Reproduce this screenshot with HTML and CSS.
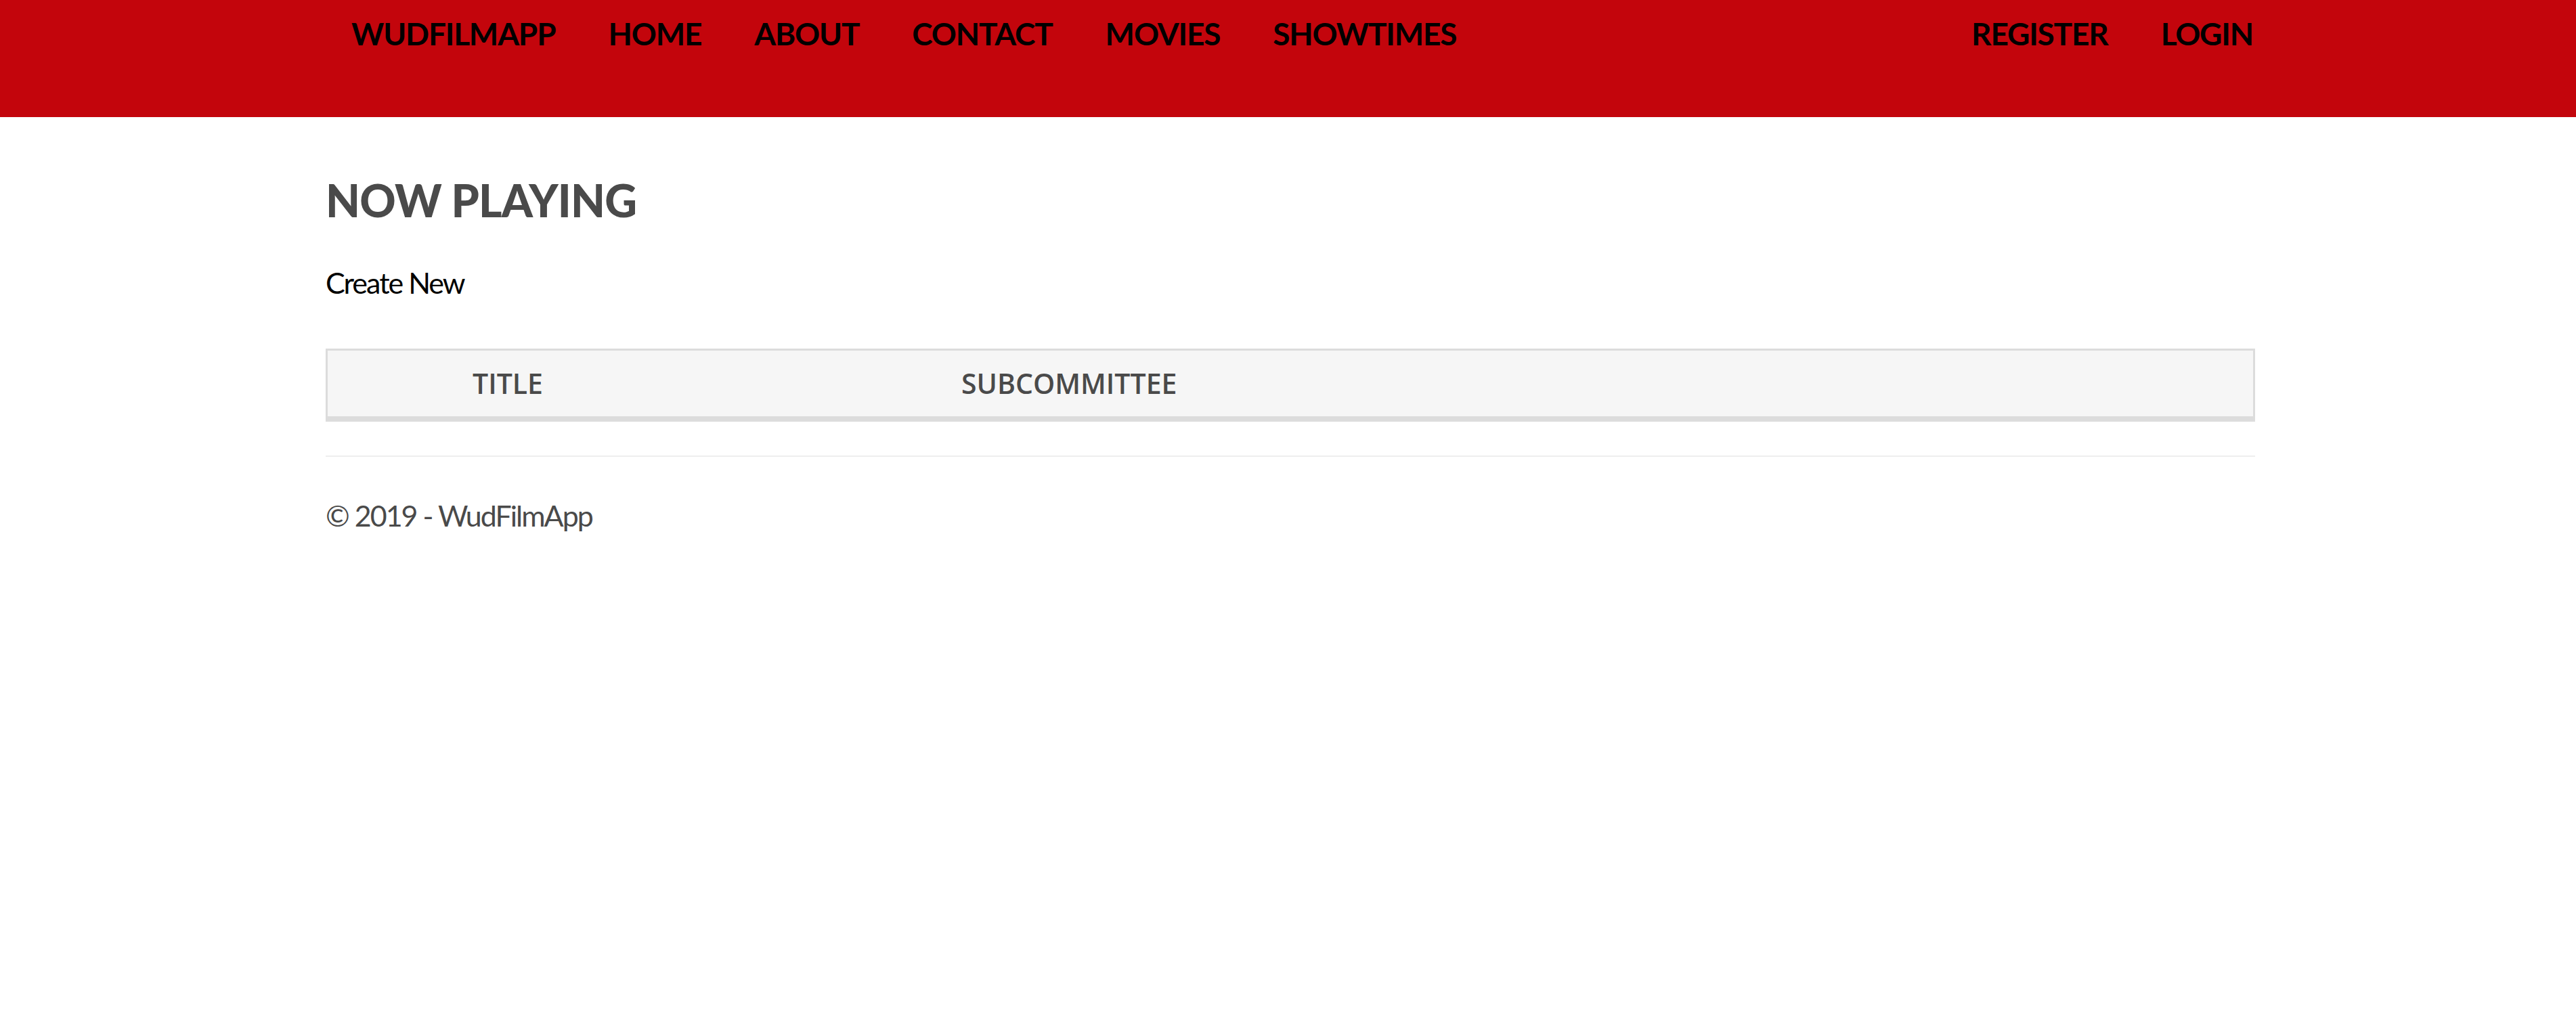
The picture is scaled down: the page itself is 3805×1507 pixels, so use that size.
FILE: index.html
```html
<!DOCTYPE html>
<html lang="en">
<head>
<meta charset="utf-8">
<title>Now Playing - WudFilmApp</title>
<link rel="stylesheet" href="styles.css">
</head>
<body>
<header class="navbar">
  <nav class="nav-inner">
    <ul class="nav-list">
      <li><a class="nav-link" href="#">WUDFILMAPP</a></li>
      <li><a class="nav-link" href="#">HOME</a></li>
      <li><a class="nav-link" href="#">ABOUT</a></li>
      <li><a class="nav-link" href="#">CONTACT</a></li>
      <li><a class="nav-link" href="#">MOVIES</a></li>
      <li><a class="nav-link" href="#">SHOWTIMES</a></li>
    </ul>
    <ul class="nav-list">
      <li><a class="nav-link" href="#">REGISTER</a></li>
      <li><a class="nav-link" href="#">LOGIN</a></li>
    </ul>
  </nav>
</header>
<main class="container">
  <h2 class="page-title">NOW PLAYING</h2>
  <p class="actions"><a class="create-link" href="#">Create New</a></p>
  <table class="movies-table">
    <thead>
      <tr>
        <th class="col-poster"></th>
        <th class="col-title">TITLE</th>
        <th class="col-sub">SUBCOMMITTEE</th>
      </tr>
    </thead>
    <tbody></tbody>
  </table>
  <hr class="footer-rule">
  <footer class="site-footer">
    <p>&copy; 2019 - WudFilmApp</p>
  </footer>
</main>
</body>
</html>
```
FILE: styles.css
```css
html, body {
  margin: 0;
  padding: 0;
  background: #ffffff;
}

body {
  font-family: Lato, "Noto Sans", sans-serif;
  color: #4a4a4a;
}

.navbar {
  background: #c3050c;
  height: 173px;
}

.nav-inner {
  width: 2809px;
  margin-left: calc(50% - 1383.5px);
  padding-top: 26px;
  display: flex;
  justify-content: space-between;
}

.nav-list {
  display: flex;
  gap: 78px;
  list-style: none;
  margin: 0;
  padding: 0;
}

.nav-link {
  display: block;
  font-size: 46px;
  font-weight: 700;
  letter-spacing: -1.2px;
  line-height: 48px;
  color: #000000;
  text-decoration: none;
}

.container {
  width: 2850px;
  margin-left: calc(50% - 1421.5px);
}

.page-title {
  margin: 86px 0 0;
  font-size: 66px;
  font-weight: 900;
  letter-spacing: -0.8px;
  line-height: 74px;
  color: #4a4a4a;
}

.actions {
  margin: 53px 0 0;
  font-size: 43px;
  letter-spacing: -2px;
  line-height: 64px;
}

.create-link {
  color: #000000;
  text-decoration: none;
}

.movies-table {
  width: 100%;
  margin-top: 65px;
  border-collapse: separate;
  border-spacing: 0;
  border: 3px solid #dcdcdc;
  background: #f6f6f6;
}

.movies-table th {
  height: 97px;
  padding: 0;
  text-align: left;
  font-family: "Open Sans", "Noto Sans", sans-serif;
  font-weight: 600;
  font-size: 41px;
  line-height: 95px;
  color: #4a4a4a;
  border-bottom: 5px solid #dcdcdc;
}

.col-poster {
  width: 214px;
}

.col-title {
  width: 722px;
}

.footer-rule {
  margin: 50px 0 0;
  border: 0;
  border-top: 2px solid #eeeeee;
}

.site-footer p {
  margin: 55px 0 0;
  font-size: 43px;
  letter-spacing: -2px;
  line-height: 63px;
  color: #4a4a4a;
}
```
